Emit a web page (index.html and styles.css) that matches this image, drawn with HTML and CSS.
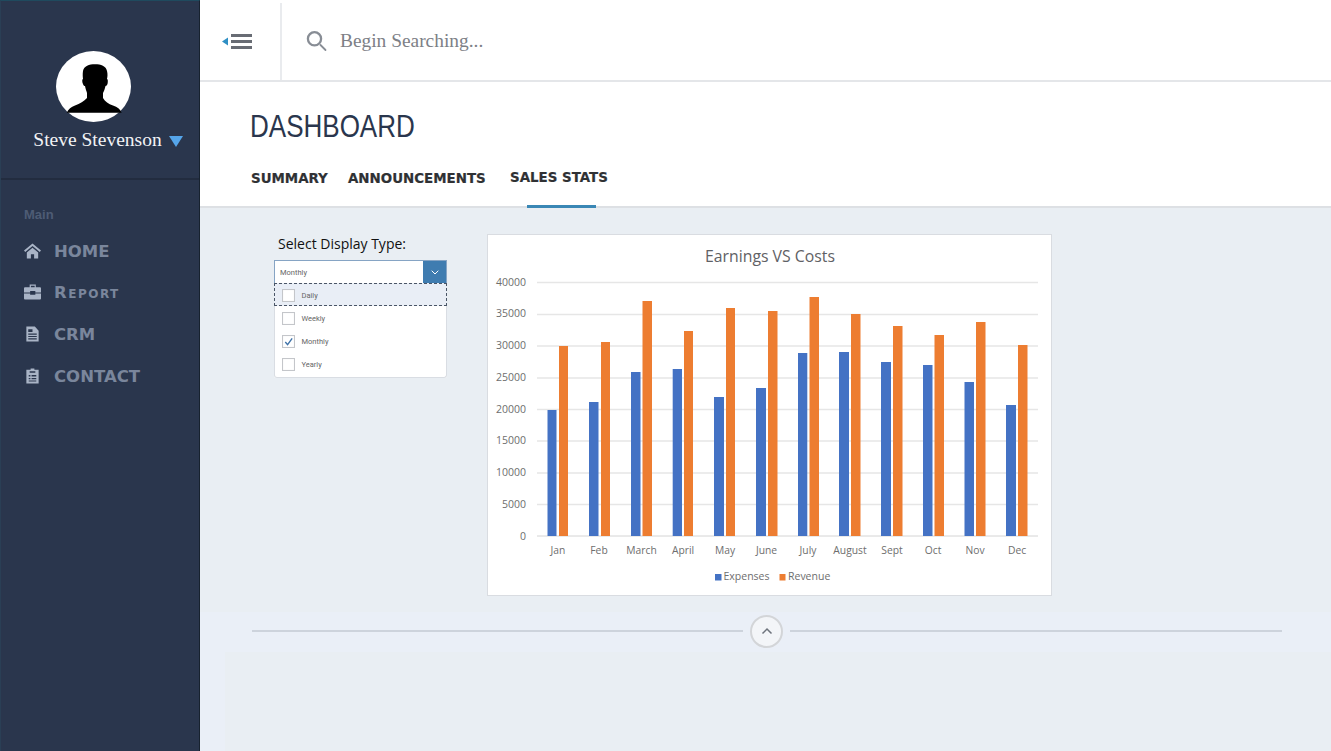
FILE: index.html
```html
<!DOCTYPE html>
<html lang="en">
<head>
<meta charset="utf-8">
<title>Dashboard</title>
<link rel="stylesheet" href="styles.css">
</head>
<body>
<div class="app">
  <aside class="sidebar">
    <div class="profile">
      <svg class="avatar" viewBox="0 0 75 71" aria-hidden="true">
        <ellipse cx="37.500" cy="35.500" rx="37.500" ry="35.500" fill="#fff"/>
        <path fill="#000" d="M39 13.300C33 13.300 28 15 27 20c-.5 3-.2 6 0 8-1 0-1 3 0 5 .5 1.500 1 2 2 2 .5 3 1.500 5 2 7v5c-3 3-7 5.500-12 7.500-4 1.500-6.500 3.500-8.300 7.200h55c-1.700-3.700-4.200-5.700-8.700-7.200-4.500-1.500-8-4-10-7.500v-5c1-2 1.800-4 2.500-7 1 0 1.500-1 2-2 .5-2 .5-5-.5-5 .5-2 .8-5 0-8-1-5-6-6.700-12-6.700z"/>
      </svg>
      <div class="user">
        <span class="user-name">Steve Stevenson</span>
        <svg class="user-caret" viewBox="0 0 14 11" aria-hidden="true"><path d="M0 0h14L7 11z" fill="#55a5ea"/></svg>
      </div>
    </div>
    <nav class="nav">
      <div class="nav-label">Main</div>
      <a class="nav-item">
        <svg class="nav-icon" viewBox="0 0 18 16" aria-hidden="true"><path d="M9 0 0 7.500 1.300 9 9 2.700 16.700 9 18 7.500z"/><path d="M9 4.500 3 9.500V16h4.300v-4.500h3.400V16H15V9.500z"/></svg>
        <span class="nav-text">HOME</span>
      </a>
      <a class="nav-item">
        <svg class="nav-icon" viewBox="0 0 18 16" aria-hidden="true"><path fill-rule="evenodd" d="M6 0h6.500v3H17a1 1 0 0 1 1 1v4.500H12V7H6.500v1.500H0V4a1 1 0 0 1 1-1h5zm1.300 1.300V3h4V1.300z"/><path d="M0 9.700h6.500V11H12V9.700h6V15a1 1 0 0 1-1 1H1a1 1 0 0 1-1-1z"/></svg>
        <span class="nav-text nav-text-report">Report</span>
      </a>
      <a class="nav-item">
        <svg class="nav-icon" viewBox="0 0 18 16" aria-hidden="true"><path fill-rule="evenodd" d="M2.500 0h9l4 4.500V16h-13zM4.500 3v3H9V3zm0 4.500v1.200h9V7.500zm0 2.500v1.200h9V10zm0 2.500v1.200h9v-1.200z"/></svg>
        <span class="nav-text">CRM</span>
      </a>
      <a class="nav-item">
        <svg class="nav-icon" viewBox="0 0 18 16" aria-hidden="true"><path fill-rule="evenodd" d="M7 0h4v1.500h4.500V16h-13V1.500H7zM6 4.500h6V3H6zm-1 2.500v1.500h1.800V7zm3 0v1.500h5V7zm-3 3v1.500h1.800V10zm3 0v1.500h5V10zm-3 2.700v1.200h8v-1.200z"/></svg>
        <span class="nav-text">CONTACT</span>
      </a>
    </nav>
  </aside>

  <main class="main">
    <header class="topbar">
      <div class="toggle">
        <svg class="toggle-icon" viewBox="0 0 30 15" aria-hidden="true">
          <path d="M0 7.500 6 3.500v8z" fill="#2f8fc4"/>
          <path d="M9 0h21v3H9zM9 6h21v3H9zM9 12h21v3H9z" fill="#686c74"/>
        </svg>
      </div>
      <div class="search">
        <svg class="search-icon" viewBox="0 0 24 24" aria-hidden="true">
          <circle cx="8.500" cy="8.800" r="6.600" fill="none" stroke="#888d95" stroke-width="2.300"/>
          <path d="M14.500 15l5 5" stroke="#888d95" stroke-width="1.800" stroke-linecap="round"/>
        </svg>
        <span class="search-text">Begin Searching...</span>
      </div>
    </header>

    <section class="page-head">
      <h1 class="page-title">DASHBOARD</h1>
      <div class="tabs">
        <a class="tab tab-summary">SUMMARY</a>
        <a class="tab tab-announce">ANNOUNCEMENTS</a>
        <a class="tab tab-active">SALES STATS</a>
      </div>
    </section>

    <section class="content">
      <div class="panel-row">
        <div class="filter">
          <div class="filter-label">Select Display Type:</div>
          <div class="dropdown">
            <div class="dropdown-head">
              <span class="dropdown-value">Monthly</span>
              <span class="dropdown-btn">
                <svg viewBox="0 0 8 5" class="dropdown-chevron" aria-hidden="true"><path d="M.7.7 4 4 7.300.7" fill="none" stroke="#fff" stroke-width="1"/></svg>
              </span>
            </div>
            <div class="dropdown-list">
              <div class="option option-focus"><span class="check"></span><span>Daily</span></div>
              <div class="option"><span class="check"></span><span>Weekly</span></div>
              <div class="option"><span class="check">
                <svg viewBox="0 0 12 12" class="check-mark" aria-hidden="true"><path d="M2.500 6.500 5 9.500 10 2.500" fill="none" stroke="#3f72a8" stroke-width="1.500"/></svg>
              </span><span>Monthly</span></div>
              <div class="option"><span class="check"></span><span>Yearly</span></div>
            </div>
          </div>
        </div>

        <div class="chart-card">
          <svg class="chart" viewBox="488 235 563 360" role="img" aria-label="Earnings VS Costs">
            <text class="chart-title" x="770" y="262">Earnings VS Costs</text>
            <g class="grid">
              <path d="M537 282.500h501M537 314.500h501M537 346h501M537 378h501M537 409.500h501M537 441h501M537 473h501M537 504.500h501"/>
            </g>
            <path class="axis" d="M537 536h501"/>
            <g class="y-labels">
              <text x="526" y="286">40000</text><text x="526" y="317">35000</text><text x="526" y="349">30000</text><text x="526" y="381">25000</text><text x="526" y="413">20000</text><text x="526" y="444">15000</text><text x="526" y="476">10000</text><text x="526" y="508">5000</text><text x="526" y="540">0</text>
            </g>
            <g class="exp">
              <rect x="547.500" y="410" width="9" height="126"/><rect x="589" y="402" width="9.500" height="134"/><rect x="631" y="372" width="9.500" height="164"/><rect x="672.700" y="369" width="9.300" height="167"/><rect x="714" y="397" width="10" height="139"/><rect x="756" y="388" width="10" height="148"/><rect x="798" y="353" width="9.300" height="183"/><rect x="839" y="352" width="10" height="184"/><rect x="881" y="362" width="10" height="174"/><rect x="923" y="365" width="9.500" height="171"/><rect x="964.500" y="382" width="9.500" height="154"/><rect x="1006" y="405" width="10" height="131"/>
            </g>
            <g class="rev">
              <rect x="559" y="346" width="9" height="190"/><rect x="601" y="342" width="9" height="194"/><rect x="642.500" y="301" width="9.500" height="235"/><rect x="684" y="331" width="9" height="205"/><rect x="726" y="308" width="9" height="228"/><rect x="768" y="311" width="9.500" height="225"/><rect x="809.500" y="297" width="9.500" height="239"/><rect x="851" y="314" width="9.500" height="222"/><rect x="893" y="326" width="9.500" height="210"/><rect x="934.500" y="335" width="9.500" height="201"/><rect x="976" y="322" width="9.500" height="214"/><rect x="1018" y="345" width="9.500" height="191"/>
            </g>
            <g class="x-labels">
              <text x="558" y="554">Jan</text><text x="599" y="554">Feb</text><text x="641.500" y="554">March</text><text x="683" y="554">April</text><text x="725" y="554">May</text><text x="766.500" y="554">June</text><text x="808" y="554">July</text><text x="850" y="554">August</text><text x="892" y="554">Sept</text><text x="933" y="554">Oct</text><text x="975" y="554">Nov</text><text x="1017" y="554">Dec</text>
            </g>
            <rect class="exp" x="715" y="574" width="6.500" height="6.500"/>
            <text class="legend" x="723.500" y="580">Expenses</text>
            <rect class="rev" x="779.500" y="574" width="6" height="6.500"/>
            <text class="legend" x="788" y="580">Revenue</text>
          </svg>
        </div>
      </div>

      <div class="collapse-row">
        <span class="collapse-line"></span>
        <span class="collapse-btn">
          <svg viewBox="0 0 12 8" class="collapse-chevron" aria-hidden="true"><path d="M1.500 6.500 6 2l4.500 4.500" fill="none" stroke="#6d737c" stroke-width="1.500"/></svg>
        </span>
        <span class="collapse-line"></span>
      </div>
    </section>
  </main>
</div>
</body>
</html>
```

FILE: styles.css
```css
* { box-sizing: border-box; }

html, body {
  margin: 0;
  height: 100%;
  overflow: hidden;
}

.app {
  display: flex;
  width: 1331px;
  height: 751px;
  background: #e9eef3;
  font-family: "Liberation Sans", sans-serif;
}

/* Sidebar */
.sidebar {
  flex: none;
  width: 200px;
  background: #2a364d;
  border-top: 1px solid #1f4a5e;
  border-left: 1px solid #2a3f55;
  border-right: 1px solid #17222f;
}

.profile {
  height: 179px;
  padding-top: 50px;
  border-bottom: 2px solid #222c3f;
  display: flex;
  flex-direction: column;
  align-items: center;
}

.avatar {
  width: 75px;
  height: 71px;
  margin-right: 13px;
}

.user {
  display: flex;
  align-items: center;
  gap: 7px;
  margin-top: 5px;
  margin-left: 16px;
}

.user-name {
  font-family: "Liberation Serif", serif;
  font-size: 19.500px;
  line-height: 26px;
  color: #f2f3f5;
}

.user-caret {
  width: 14px;
  height: 11px;
  margin-top: 3px;
}

.nav {
  padding: 27px 0 0 23px;
}

.nav-label {
  font-size: 13px;
  font-weight: 700;
  line-height: 15px;
  color: #4e5c75;
  margin-bottom: 9px;
}

.nav-item {
  display: flex;
  align-items: center;
  height: 41.600px;
  gap: 13px;
}

.nav-icon {
  width: 17px;
  height: 16px;
  fill: #a9b4c6;
  flex: none;
  margin-top: -2px;
}

.nav-text {
  font-family: "DejaVu Sans", sans-serif;
  font-size: 16.500px;
  font-weight: 700;
  color: #7a869c;
  line-height: 18px;
}

.nav-text-report {
  font-variant: small-caps;
  letter-spacing: 1.500px;
}

/* Top bar */
.main {
  flex: 1;
  min-width: 0;
  display: flex;
  flex-direction: column;
}

.topbar {
  height: 82px;
  flex: none;
  display: flex;
  background: #fff;
  border-bottom: 2px solid #e4e6e9;
  padding-top: 3px;
}

.toggle {
  width: 82px;
  border-right: 2px solid #e9ebee;
  display: flex;
  align-items: center;
  padding-left: 22px;
}

.toggle-icon {
  width: 30px;
  height: 15px;
}

.search {
  display: flex;
  align-items: center;
  gap: 10px;
  padding-left: 24px;
}

.search-icon {
  width: 24px;
  height: 24px;
}

.search-text {
  font-family: "Liberation Serif", serif;
  font-size: 19.400px;
  color: #7d8086;
  margin-top: -2px;
}

/* Page head */
.page-head {
  flex: none;
  height: 126px;
  background: #fff;
  border-bottom: 2px solid #dde0e4;
  padding: 25px 0 0 50px;
}

.page-title {
  margin: 0;
  font-size: 32px;
  font-weight: 400;
  line-height: 38px;
  color: #2a364d;
  transform: scaleX(.813);
  transform-origin: left center;
}

.tabs {
  display: flex;
  margin: 25px 0 0 1px;
  height: 38px;
}

.tab {
  font-family: "DejaVu Sans", sans-serif;
  font-size: 13.400px;
  font-weight: 700;
  color: #2f3134;
  line-height: 18px;
  -webkit-text-stroke: .2px #2f3134;
}

.tab-summary { width: 97px; }

.tab-announce { width: 162px; }

.tab-active {
  position: relative;
  top: -1px;
}

.tab-active::after {
  content: "";
  position: absolute;
  left: 17px;
  width: 69px;
  top: 36px;
  height: 3px;
  background: #3a87b5;
}

/* Content */
.content {
  flex: 1;
  min-height: 0;
  background: linear-gradient(#eaeff7, #eaeff7) no-repeat left bottom / 25px 139px;
}

.panel-row {
  display: flex;
  align-items: flex-start;
  padding: 26px 0 0 74px;
}

.filter {
  width: 173px;
}

.filter-label {
  font-family: "Open Sans", sans-serif;
  font-size: 14px;
  line-height: 18px;
  color: #111;
  padding: 1px 0 0 4px;
  height: 26px;
}

.dropdown {
  background: #fff;
  border-radius: 2px;
}

.dropdown-head {
  display: flex;
  height: 24px;
  border: 1px solid #86a4c4;
  border-bottom-color: #6d8db0;
}

.dropdown-value {
  flex: 1;
  font-family: "Roboto", sans-serif;
  font-size: 7.500px;
  line-height: 23px;
  padding-left: 5px;
  color: #666;
}

.dropdown-btn {
  width: 23px;
  background: #3f7cb0;
  display: flex;
  align-items: center;
  justify-content: center;
}

.dropdown-chevron {
  width: 8px;
  height: 5px;
}

.dropdown-list {
  border: 1px solid #d9dde3;
  border-top: 0;
  border-radius: 0 0 3px 3px;
}

.option {
  display: flex;
  align-items: center;
  gap: 6.500px;
  height: 23.400px;
  padding-left: 7px;
  font-family: "Roboto", sans-serif;
  font-size: 7.500px;
  color: #666;
}

.option-focus {
  background: #e9eef6;
  border: 1px dashed #4a5566;
  margin: -1px -1px 0;
  padding-top: 1px;
}

.check {
  width: 13px;
  height: 13px;
  background: #fff;
  border: 1px solid #c4c6ca;
  box-shadow: inset 0 0 1px #ddd;
  flex: none;
}

.check-mark {
  display: block;
  width: 11px;
  height: 11px;
}

/* Chart */
.chart-card {
  width: 565px;
  height: 362px;
  margin-left: 40px;
  background: #fff;
  border: 1px solid #d9dce1;
}

.chart {
  display: block;
  width: 563px;
  height: 360px;
  font-family: "Open Sans", sans-serif;
}

.chart-title {
  font-size: 15.800px;
  fill: #5f6165;
  text-anchor: middle;
}

.grid path {
  stroke: #e6e6e6;
  stroke-width: 1.300;
  fill: none;
}

.axis {
  stroke: #d4d4d4;
  stroke-width: 1;
}

.y-labels text {
  font-size: 10.500px;
  fill: #6e6e6e;
  text-anchor: end;
}

.x-labels text {
  font-size: 10.300px;
  fill: #6e6e6e;
  text-anchor: middle;
}

.legend {
  font-size: 10.500px;
  fill: #6e6e6e;
}

.exp { fill: #4472c4; }

.rev { fill: #ed7d31; }

/* Collapse divider */
.collapse-row {
  display: flex;
  align-items: center;
  height: 40px;
  margin-top: 16px;
  padding: 0 49px 2px 52px;
  background: #eaeff7;
}

.collapse-line {
  flex: none;
  height: 2px;
  background: #cdd3dc;
}

.collapse-line:first-child { width: 491px; }

.collapse-line:last-child { width: 492px; }

.collapse-btn {
  flex: none;
  width: 33px;
  height: 33px;
  margin: 0 7px;
  border-radius: 50%;
  background: #f3f5f8;
  border: 2px solid #d3d5d8;
  display: flex;
  align-items: center;
  justify-content: center;
}

.collapse-chevron {
  width: 12px;
  height: 8px;
}
```
